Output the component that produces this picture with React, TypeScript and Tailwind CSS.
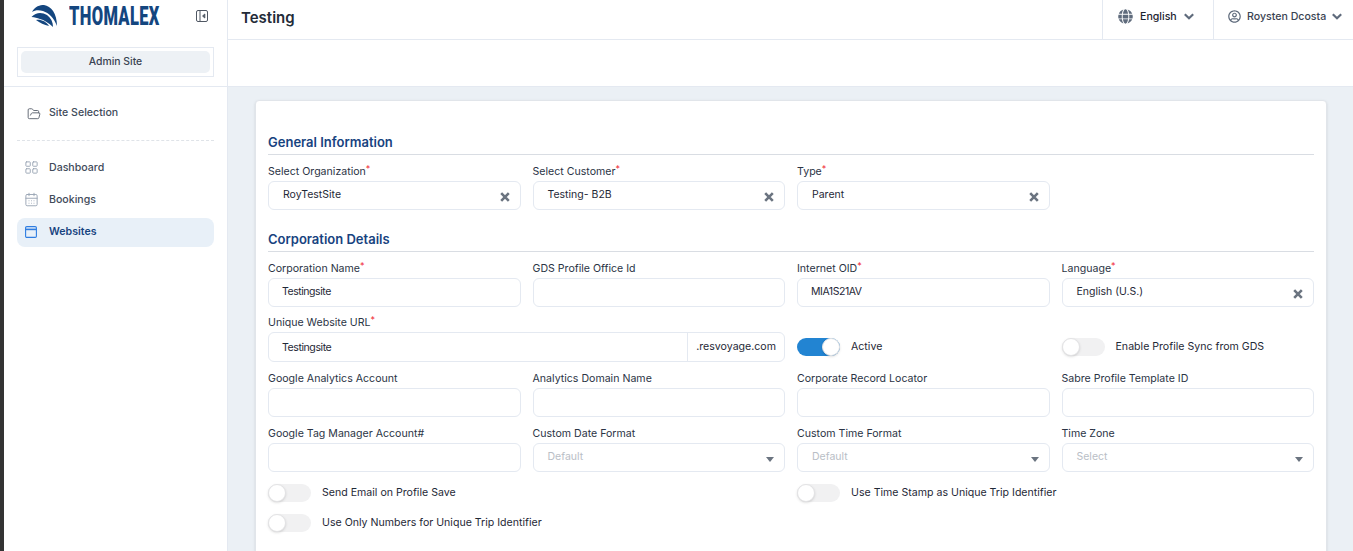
import { CalendarDays, FolderOpen, LayoutGrid } from 'lucide-react';
import { FaGlobe, FaRegUserCircle } from 'react-icons/fa';

function Label({ text, required }: { text: string; required?: boolean }) {
  return (
    <div className="h-[18px] text-[10.6px] leading-[17px] text-[#2b3445] whitespace-nowrap">
      {text}
      {required && <span className="text-[#f01f35] text-[9px] align-[3px] leading-none">*</span>}
    </div>
  );
}

function ClearIcon() {
  return (
    <svg width="10" height="10" viewBox="0 0 10 10" className="absolute right-[10px] top-[10px]" stroke="#6b7480" strokeWidth="2.6">
      <path d="M1.2 1.2L8.8 8.8M8.8 1.2L1.2 8.8" />
    </svg>
  );
}

function Chevron() {
  return (
    <svg width="10" height="7" viewBox="0 0 10 7" fill="none" stroke="#5f6b7c" strokeWidth="2.2" className="shrink-0">
      <path d="M0.8 1.2L5 5.2L9.2 1.2" />
    </svg>
  );
}

function PanelIcon() {
  return (
    <svg width="12" height="12" viewBox="0 0 12 12" fill="none" stroke="#4f5763" className="mt-[7px] shrink-0">
      <rect x="0.5" y="0.5" width="11" height="11" rx="1.5" />
      <path d="M4 0.5V11.5" />
      <path d="M8.8 4L6.6 6L8.8 8Z" fill="#4f5763" />
    </svg>
  );
}

function Box({ value, placeholder, clear, caret }: { value?: string; placeholder?: string; clear?: boolean; caret?: boolean }) {
  // typed inputs sit 1px further left and run tighter than the select values
  const typed = value && !clear;
  return (
    <div className={`relative h-[29px] rounded-[6px] border border-[#e4e9f1] bg-white text-[10.5px] leading-[25px] text-[#1f2937] ${typed ? 'px-[13px] tracking-[-0.45px]' : 'px-[14px]'}`}>
      {value}
      {placeholder && <span className="text-[#b9bec6]">{placeholder}</span>}
      {clear && <ClearIcon />}
      {caret && <span className="absolute right-[10px] top-[13px] border-x-[4px] border-t-[5px] border-x-transparent border-t-[#6b7480]" />}
    </div>
  );
}

function Field(props: { label: string; required?: boolean; value?: string; placeholder?: string; clear?: boolean; caret?: boolean }) {
  return (
    <div className="mt-2 min-w-0">
      <Label text={props.label} required={props.required} />
      <Box value={props.value} placeholder={props.placeholder} clear={props.clear} caret={props.caret} />
    </div>
  );
}

function Toggle({ on }: { on?: boolean }) {
  return (
    <div className={`relative h-[18px] w-[43px] shrink-0 rounded-full ${on ? 'bg-[#2284d2]' : 'bg-[#f1f1f2]'}`}>
      <div className={`absolute top-0 h-[18px] w-[18px] rounded-full border border-[#e3e3e5] bg-white shadow-sm ${on ? 'right-0' : 'left-0'}`} />
    </div>
  );
}

function ToggleRow({ label, on, className, textClass }: { label: string; on?: boolean; className?: string; textClass?: string }) {
  return (
    <div className={`flex items-center gap-[11px] text-[10.6px] text-[#1f2937] whitespace-nowrap ${className ?? ''}`}>
      <Toggle on={on} />
      <span className={textClass}>{label}</span>
    </div>
  );
}

function Heading({ text, className }: { text: string; className?: string }) {
  return (
    <h2 className={`h-[21px] border-b border-[#d9dde3] text-[13px] leading-[16px] font-semibold text-[#17437f] ${className ?? ''}`}>
      {text}
    </h2>
  );
}

function WindowIcon() {
  return (
    <svg width="12" height="12" viewBox="0 0 12 12" fill="none" stroke="#2f7de1" strokeWidth="1.1">
      <rect x="0.6" y="0.6" width="10.8" height="10.8" rx="1.2" />
      <path d="M0.6 3.4H11.4" strokeWidth="1.6" />
    </svg>
  );
}

function NavItem({ icon, label, active }: { icon: React.ReactNode; label: string; active?: boolean }) {
  return (
    <div className={`flex h-[29px] items-center rounded-[8px] pl-[8px] text-[10.6px] font-medium ${active ? 'bg-[#e8f0f8] pb-[2px] text-[#17437f] font-semibold' : 'text-[#414b5a]'}`}>
      <div className="flex w-[24px] shrink-0 items-center">{icon}</div>
      <span>{label}</span>
    </div>
  );
}

function Sidebar() {
  return (
    <aside className="flex w-[224px] shrink-0 flex-col border-r border-[#e4e9f1] bg-white">
      <div className="h-[87px] border-b border-[#e4e9f1]">
        <div className="flex h-[33px] items-start pl-[26px] pr-[19px] pt-[3px]">
          <svg width="32" height="26" viewBox="30 3 32 26" fill="#14467f" className="shrink-0">
            <path d="M32 12C35 6 40 5 44 5 51 6 57 13 57 26 54 18 49 13 43 11 39 10 35 10 32 12Z" />
            <path d="M31.500 17C36 12 42 12 47 15 51 18 53 22 53 27 49 23 44 20 40 19 37 18 35 17 31.500 17Z" />
            <path d="M36 20C40 19 46 21 49 26 44 25 40 23 36 20Z" />
          </svg>
          <div className="ml-[7px] w-0 flex-1">
            <span className="block origin-left scale-x-[0.66] font-['Roboto',sans-serif] text-[25px] leading-[28px] font-black tracking-[0.5px] text-[#14467f] whitespace-nowrap">
              THOMALEX
            </span>
          </div>
          <PanelIcon />
        </div>
        <div className="mx-[13px] mt-[14px] h-[30px] border border-[#e4e9f1] p-[3px]">
          <div className="h-[22px] rounded-[5px] bg-[#edf1f5] text-center text-[10.4px] leading-[21px] font-medium text-[#3a4352]">
            Admin Site
          </div>
        </div>
      </div>
      <div className="px-[13px] pt-[11px]">
        <NavItem icon={<FolderOpen className="ml-[2px] mt-[3px] text-[#5c6470]" size={14} strokeWidth={1.6} />} label="Site Selection" />
        <div className="mt-[13px] mb-[12px] border-t border-dashed border-[#dfe3e8]" />
        <NavItem icon={<LayoutGrid className="-ml-[1px] text-[#9aa5b4]" size={15} strokeWidth={1.5} />} label="Dashboard" />
        <div className="mt-[3px]">
          <NavItem icon={<CalendarDays className="-ml-[1px] text-[#9aa5b4]" size={15} strokeWidth={1.5} />} label="Bookings" />
        </div>
        <div className="mt-[4px]">
          <NavItem icon={<WindowIcon />} label="Websites" active />
        </div>
      </div>
    </aside>
  );
}

function TopBar() {
  return (
    <>
      <header className="flex h-[40px] items-stretch border-b border-[#e4e9f1] bg-white">
        <h1 className="flex-1 pl-[13px] text-[15px] leading-[35px] font-semibold text-[#232b38]">Testing</h1>
        <div className="flex w-[111px] items-center gap-[7px] border-l border-[#e4e9f1] pb-[6px] pl-[15px] text-[10.6px] font-medium text-[#1c2430]">
          <FaGlobe className="text-[#5f6b7c]" size={15} />
          <span>English</span>
          <Chevron />
        </div>
        <div className="flex w-[140px] items-center gap-[6px] border-l border-[#e4e9f1] pb-[6px] pl-[14px] text-[10.6px] font-medium text-[#3a4352]">
          <FaRegUserCircle className="text-[#5f6b7c]" size={13} />
          <span>Roysten Dcosta</span>
          <Chevron />
        </div>
      </header>
      <div className="h-[47px] border-b border-[#e4e9f1] bg-white" />
    </>
  );
}

function FormCard() {
  return (
    <div className="h-[600px] rounded-[4px] border border-[#e1e5ea] bg-white px-[12px] pt-[33px] shadow-sm">
      <Heading text="General Information" />
      <div className="grid grid-cols-4 gap-x-3">
        <Field label="Select Organization" required value="RoyTestSite" clear />
        <Field label="Select Customer" required value="Testing- B2B" clear />
        <Field label="Type" required value="Parent" clear />
      </div>
      <Heading text="Corporation Details" className="mt-[21px]" />
      <div className="grid grid-cols-4 gap-x-3">
        <Field label="Corporation Name" required value="Testingsite" />
        <Field label="GDS Profile Office Id" />
        <Field label="Internet OID" required value="MIA1S21AV" />
        <Field label="Language" required value="English (U.S.)" clear />
        <div className="col-span-2 mt-[7px]">
          <Label text="Unique Website URL" required />
          <div className="flex h-[30px] rounded-[6px] border border-[#e4e9f1] text-[10.6px] leading-[28px] text-[#1f2937]">
            <div className="flex-1 pl-[13px] pt-[1px] tracking-[-0.45px]">Testingsite</div>
            <div className="border-l border-[#e4e9f1] px-[8px]">.resvoyage.com</div>
          </div>
        </div>
        <ToggleRow label="Active" on className="mt-[25px] h-[29px]" textClass="pt-[1px]" />
        <ToggleRow label="Enable Profile Sync from GDS" className="mt-[25px] h-[29px]" textClass="pt-[1px]" />
        <Field label="Google Analytics Account" />
        <Field label="Analytics Domain Name" />
        <Field label="Corporate Record Locator" />
        <Field label="Sabre Profile Template ID" />
        <Field label="Google Tag Manager Account#" />
        <Field label="Custom Date Format" placeholder="Default" caret />
        <Field label="Custom Time Format" placeholder="Default" caret />
        <Field label="Time Zone" placeholder="Select" caret />
        <ToggleRow label="Send Email on Profile Save" className="col-span-2 mt-3" />
        <ToggleRow label="Use Time Stamp as Unique Trip Identifier" className="col-span-2 mt-3" />
        <ToggleRow label="Use Only Numbers for Unique Trip Identifier" className="col-span-2 mt-3" />
      </div>
    </div>
  );
}

export default function App() {
  return (
    <div className="flex h-[551px] w-[1353px] overflow-hidden border-l-[4px] border-[#333333] bg-white font-['Inter',sans-serif]">
      <Sidebar />
      <main className="flex min-w-0 flex-1 flex-col">
        <TopBar />
        <div className="flex-1 overflow-hidden bg-[#ebf0f5] pl-[27px] pr-[26px] pt-[13px]">
          <FormCard />
        </div>
      </main>
    </div>
  );
}
